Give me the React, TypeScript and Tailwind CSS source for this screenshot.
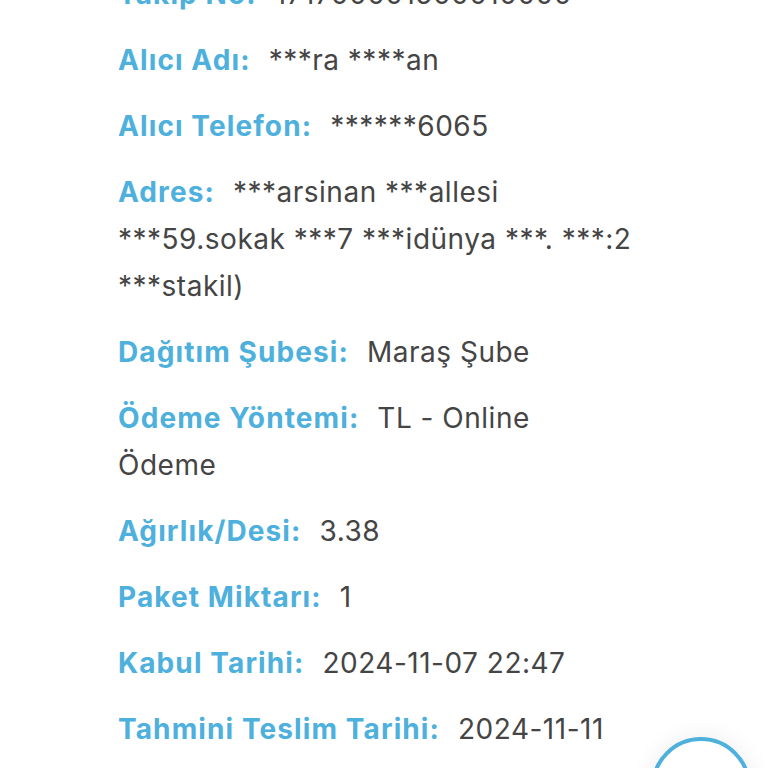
import React from "react";

interface Row {
  label: string;
  value: React.ReactNode;
}

const ROWS: Row[] = [
  { label: "Takip No:", value: "171700001500010000" },
  { label: "Alıcı Adı:", value: "***ra ****an" },
  { label: "Alıcı Telefon:", value: "******6065" },
  {
    label: "Adres:",
    value: "***arsinan ***allesi ***59.sokak ***7 ***idünya ***. ***:2 ***stakil)",
  },
  { label: "Dağıtım Şubesi:", value: "Maraş Şube" },
  {
    label: "Ödeme Yöntemi:",
    value: (
      <>
        TL - Online
        <br />
        Ödeme
      </>
    ),
  },
  { label: "Ağırlık/Desi:", value: "3.38" },
  { label: "Paket Miktarı:", value: "1" },
  { label: "Kabul Tarihi:", value: "2024-11-07 22:47" },
  { label: "Tahmini Teslim Tarihi:", value: "2024-11-11" },
];

export default function App() {
  return (
    <div
      className="relative w-[768px] h-[768px] overflow-hidden bg-white"
      style={{ fontFamily: "Inter, 'Noto Sans', sans-serif" }}
    >
      {/* Shipment details list */}
      <div className="w-[540px] ml-[118px] mt-[-29px] flex flex-col gap-[19px]">
        {ROWS.map((row) => (
          <p
            key={row.label}
            className="text-[28px] leading-[47px] tracking-[0.5px] text-[#454545]"
          >
            <span className="font-bold tracking-[1.1px] text-[#4eb0dc] mr-[18px]">
              {row.label}
            </span>
            {row.value}
          </p>
        ))}
      </div>

      {/* Floating action button (partly off-screen) */}
      <div className="absolute left-[651px] top-[737px] w-[100px] h-[100px] rounded-full bg-white border-[4px] border-[#4eb0dc] shadow-[0_0_24px_rgba(0,0,0,0.08)]" />
    </div>
  );
}
